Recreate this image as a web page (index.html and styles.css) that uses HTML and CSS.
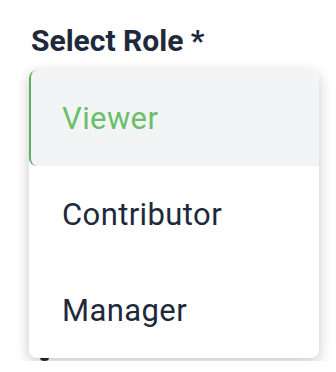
FILE: index.html
```html
<!DOCTYPE html>
<html>
    <head>
        <meta charset="UTF-8">
        <title>Select Role</title>
        <link rel="stylesheet" href="styles.css">
    </head>
    <body>
        <div class="form">
            <label class="label">Select Role *</label>
            <div class="select">
                <div class="field"></div>
                <div class="below"><span class="dot"></span></div>
                <ul class="menu">
                    <li class="option active">Viewer</li>
                    <li class="option">Contributor</li>
                    <li class="option">Manager</li>
                </ul>
            </div>
        </div>
    </body>
</html>
```

FILE: styles.css
```css
html, body{
    margin:0;
    background:#fff;
    font-family:Roboto, "Liberation Sans", sans-serif;
    color:#1e293b;
}
.form{
    padding:26px 17px 0 29px;
}
.label{
    display:block;
    margin-left:2px;
    font-size:30px;
    line-height:30px;
    font-weight:700;
}
.select{
    position:relative;
    margin-top:14px;
}
.field{
    height:48px;
}
.below{
    margin-top:236px;
    padding-left:11px;
}
.dot{
    display:block;
    width:9px;
    height:7px;
    border-radius:50%;
    background:#1e293b;
}
.menu{
    position:absolute;
    top:0;
    left:0;
    width:290px;
    margin:0;
    padding:0;
    list-style:none;
    background:#fff;
    border-radius:8px;
    box-shadow:0 4px 14px rgba(0,0,0,0.22);
    overflow:hidden;
}
.option{
    display:flex;
    align-items:center;
    height:96px;
    padding-left:31px;
    border-left:2px solid transparent;
    font-size:31px;
    letter-spacing:0.4px;
}
.option.active{
    background:#f3f4f6;
    color:#6abf69;
    border-left-color:#5fae5e;
    border-radius:8px 0 0 8px;
}
```
